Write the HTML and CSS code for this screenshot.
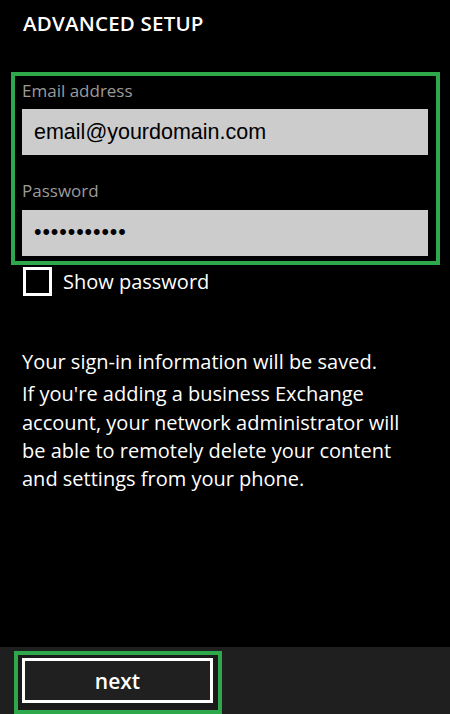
FILE: index.html
```html
<!DOCTYPE html>
<html lang="en">
<head>
<meta charset="utf-8">
<title>Advanced setup</title>
<link rel="stylesheet" href="styles.css">
</head>
<body>
<div class="page">
  <main class="content">
    <h1 class="title">ADVANCED SETUP</h1>
    <section class="highlight">
      <div class="field">
        <label class="field-label">Email address</label>
        <div class="input">email@yourdomain.com</div>
      </div>
      <div class="field field-second">
        <label class="field-label">Password</label>
        <div class="input input-password">•••••••••••</div>
      </div>
    </section>
    <div class="check-row">
      <span class="checkbox"></span>
      <span class="check-label">Show password</span>
    </div>
    <div class="info">
      <p class="info-first">Your sign-in information will be saved.</p>
      <p class="info-second">If you're adding a business Exchange account, your network administrator will be able to remotely delete your content and settings from your phone.</p>
    </div>
  </main>
  <footer class="app-bar">
    <div class="btn-highlight">
      <button class="btn-next">next</button>
    </div>
  </footer>
</div>
</body>
</html>
```

FILE: styles.css
```css
html, body {
  margin: 0;
  padding: 0;
  background: #000;
}

body {
  font-family: "Open Sans", "Noto Sans", sans-serif;
  color: #fff;
}

.page {
  height: 714px;
  display: flex;
  flex-direction: column;
  overflow: hidden;
}

.content {
  flex: 1;
  display: flex;
  flex-direction: column;
}

.title {
  margin: 0;
  padding: 9px 0 0 23px;
  font-size: 20.5px;
  font-weight: 600;
  line-height: 28px;
  letter-spacing: 0.2px;
}

.highlight {
  margin: 35px 0 0 11px;
  width: 406px;
  border: 4px solid #2da84b;
  padding: 5px 8px 5px 7px;
}

.field {
  display: flex;
  flex-direction: column;
}

.field-second {
  margin-top: 26px;
}

.field-label {
  font-size: 17px;
  line-height: 20px;
  color: #9b9b9b;
  margin-bottom: 8px;
}

.field-second .field-label {
  margin-bottom: 9px;
}

.input {
  background: #cccccc;
  height: 46px;
  line-height: 46px;
  padding-left: 12px;
  color: #000;
  font-family: "Liberation Sans", Arial, sans-serif;
  font-size: 21.5px;
}

.input-password {
  letter-spacing: 0.9px;
  line-height: 44px;
}

.check-row {
  display: flex;
  align-items: center;
  margin: 2px 0 0 23px;
  gap: 11px;
}

.checkbox {
  width: 23px;
  height: 23px;
  border: 3px solid #fff;
}

.check-label {
  font-size: 20px;
  line-height: 28px;
}

.info {
  margin: 52px 0 0 22px;
  padding-right: 30px;
  font-size: 20px;
  line-height: 28.3px;
}

.info p {
  margin: 0;
}

.info-second {
  margin-top: 4px !important;
}

.app-bar {
  height: 67px;
  background: #1f1f1f;
  padding: 4px 0 0 14px;
  box-sizing: border-box;
}

.btn-highlight {
  box-sizing: border-box;
  width: 208px;
  height: 63px;
  border: 4px solid #2da84b;
  padding: 3px 5px 0 4px;
  background: #1a1a1a;
}

.btn-next {
  display: block;
  width: 191px;
  height: 45px;
  margin: 0;
  padding: 0;
  background: #202020;
  border: 3px solid #fff;
  color: #fff;
  font-family: "Open Sans", "Noto Sans", sans-serif;
  font-size: 21px;
  font-weight: 600;
  line-height: 36px;
}
```
